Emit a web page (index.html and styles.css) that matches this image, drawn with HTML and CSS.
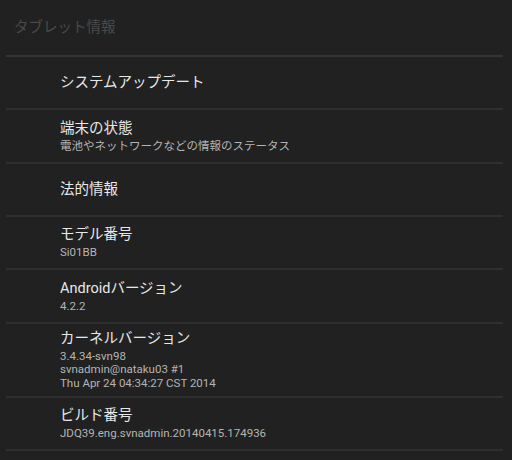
FILE: index.html
```html
<!DOCTYPE html>
<html lang="ja">
<head>
    <meta charset="UTF-8">
    <meta name="viewport" content="width=device-width, initial-scale=1.0">
    <title>タブレット情報</title>
    <link rel="stylesheet" href="styles.css">
</head>
<body>
    <div id="wrap">
        <div class="header">タブレット情報</div>
        <ul class="list">
            <li class="item">
                <div class="title">システムアップデート</div>
            </li>
            <li class="item">
                <div class="title">端末の状態</div>
                <div class="summary">電池やネットワークなどの情報のステータス</div>
            </li>
            <li class="item">
                <div class="title">法的情報</div>
            </li>
            <li class="item">
                <div class="title">モデル番号</div>
                <div class="summary">Si01BB</div>
            </li>
            <li class="item">
                <div class="title">Androidバージョン</div>
                <div class="summary">4.2.2</div>
            </li>
            <li class="item tall">
                <div class="title">カーネルバージョン</div>
                <div class="summary">3.4.34-svn98<br>svnadmin@nataku03 #1<br>Thu Apr 24 04:34:27 CST 2014</div>
            </li>
            <li class="item">
                <div class="title">ビルド番号</div>
                <div class="summary">JDQ39.eng.svnadmin.20140415.174936</div>
            </li>
        </ul>
    </div>
</body>
</html>
```

FILE: styles.css
```css
html, body{
    margin: 0;
    padding: 0;
    background-color: #212121;
    height: 100%;
    overflow: hidden;
}
#wrap{
    font-family: Roboto, "Noto Sans CJK JP", sans-serif;
    padding: 0 9px 0 6px;
}
.header{
    height: 55px;
    line-height: 55px;
    padding-left: 8px;
    font-size: 14.5px;
    color: #4a4a4a;
    border-bottom: 2px solid #353535;
}
.list{
    margin: 0;
    padding: 0;
    list-style: none;
}
.item{
    height: 51.33px;
    padding-left: 54px;
    border-bottom: 2px solid #2f2f2f;
    display: flex;
    flex-direction: column;
    justify-content: center;
}
.item.tall{
    height: 72px;
}
.title{
    font-size: 14.5px;
    line-height: 19px;
    color: #e8e8e8;
}
.summary{
    font-size: 11.5px;
    line-height: 13.5px;
    color: #b4b4b4;
    margin-top: 2px;
}
```
